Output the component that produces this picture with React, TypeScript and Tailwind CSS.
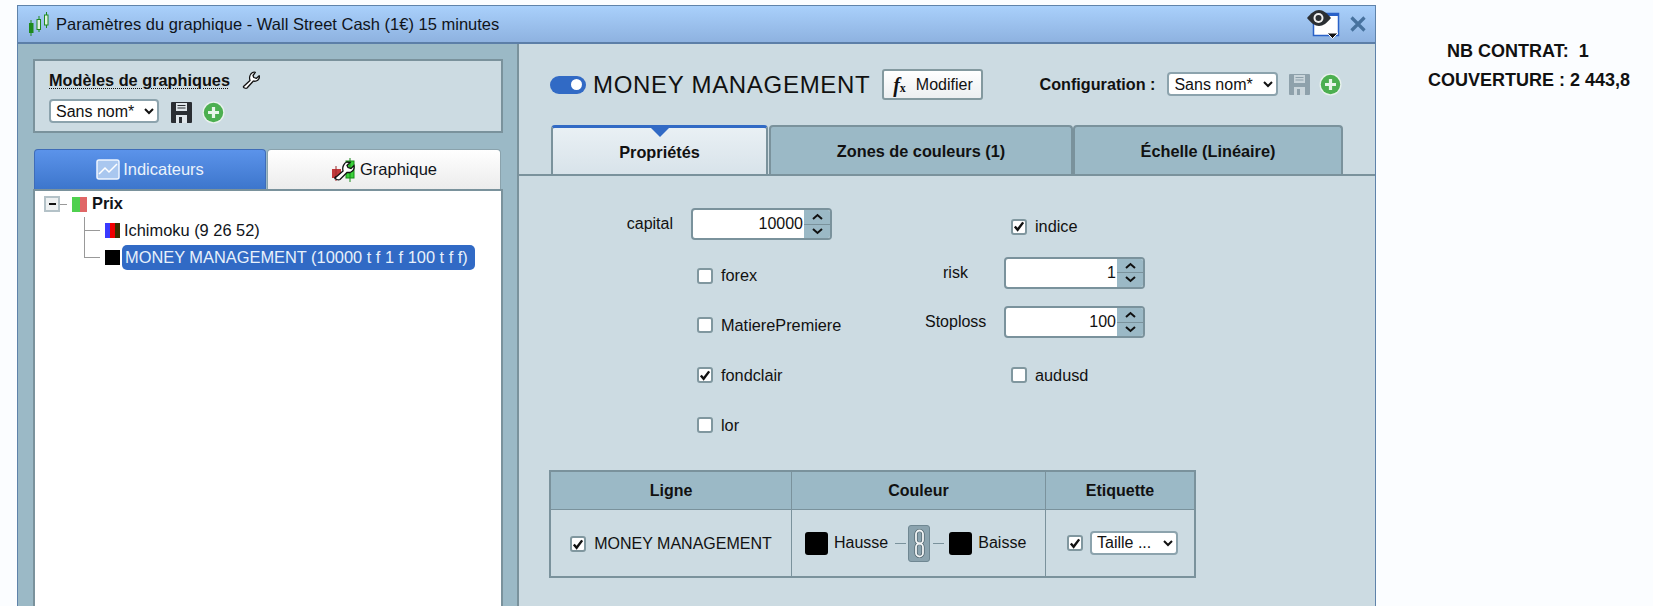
import React from "react";

const F = '[font-family:"Liberation_Sans",Arial,sans-serif]';

function Candles() {
  return (
    <svg width="20" height="24" viewBox="0 0 20 24" className="shrink-0">
      <path d="M2 8v16M10 4v16M17.500 0v16" stroke="#1f8a1f" strokeWidth="1" />
      <rect x="0" y="11" width="4.500" height="10" fill="#1d8a1d" />
      <rect x="8" y="7.500" width="3.500" height="10" fill="#dff3df" stroke="#1f8a1f" />
      <rect x="15.500" y="3" width="3.500" height="10" fill="#dff3df" stroke="#1f8a1f" />
    </svg>
  );
}

function Floppy({ dim }: { dim?: boolean }) {
  const c = dim ? "#8ea1ab" : "#2a2e33";
  return (
    <svg width="21" height="21" viewBox="0 0 21 21" className="shrink-0">
      <path d="M1 0h19a1 1 0 0 1 1 1v19a1 1 0 0 1-1 1H1a1 1 0 0 1-1-1V1a1 1 0 0 1 1-1z" fill={c} />
      <rect x="5" y="1" width="11" height="8" fill={dim ? "#c9d5db" : "#dfe6ea"} />
      <path d="M6.500 3.500h8M6.500 6h8" stroke={c} strokeWidth="1" />
      <rect x="5" y="13" width="11" height="8" fill={dim ? "#c9d5db" : "#dfe6ea"} />
      <rect x="8" y="15" width="3" height="6" fill={c} />
    </svg>
  );
}

function Plus() {
  return (
    <svg width="23" height="23" viewBox="0 0 23 23" className="shrink-0">
      <circle cx="11.500" cy="11.500" r="11" fill="#e9f2ee" />
      <circle cx="11.500" cy="11.500" r="9.700" fill="#4caf50" />
      <path d="M11.500 6v11M6 11.500h11" stroke="#e8f5e9" strokeWidth="3.200" />
    </svg>
  );
}

function Wrench() {
  return (
    <svg width="19" height="19" viewBox="0 0 19 19" className="shrink-0">
      <path
        d="M1.500 15.500 8 9.500C7 6.500 8 3 10.500 1.500c1-.5 2-.5 2.800-.2L11 4.500l.8 2 2.700.8 2.700-2.500c.6 2-.6 4.500-3 5.200-1 .3-2 .3-2.800 0L5 17c-1 .8-4.200-.3-3.500-1.500z"
        fill="#fff"
        stroke="#111"
        strokeWidth="1.300"
        strokeLinejoin="round"
      />
    </svg>
  );
}

function Check() {
  return (
    <svg width="13" height="13" viewBox="0 0 13 13">
      <path d="M2 6.500 5 10l6-8" fill="none" stroke="#111" strokeWidth="2.600" />
    </svg>
  );
}

function Box({ on }: { on?: boolean }) {
  return (
    <span className="flex h-[16px] w-[16px] shrink-0 items-center justify-center rounded-[3px] border-2 border-[#80979f] bg-white">
      {on && <Check />}
    </span>
  );
}

function CheckRow({ label, on }: { label: string; on?: boolean }) {
  return (
    <span className="flex items-center gap-[8px] whitespace-nowrap text-[16.300px] text-[#111]">
      <Box on={on} />
      {label}
    </span>
  );
}

function Spin({ value, w }: { value: string; w: string }) {
  return (
    <span className={`flex h-[32px] ${w} overflow-hidden rounded-[4px] border-2 border-[#7a929c] bg-white`}>
      <span className="flex flex-1 items-center justify-end pr-[1px] text-[16px] text-[#111]">{value}</span>
      <span className="flex w-[26px] flex-col bg-[#9bb9c6]">
        <span className="flex flex-1 items-center justify-center border-b border-[#7a929c]">
          <svg width="11" height="7" viewBox="0 0 11 7"><path d="M1 6l4.500-4L10 6" fill="none" stroke="#111" strokeWidth="2" /></svg>
        </span>
        <span className="flex flex-1 items-center justify-center">
          <svg width="11" height="7" viewBox="0 0 11 7"><path d="M1 1l4.500 4L10 1" fill="none" stroke="#111" strokeWidth="2" /></svg>
        </span>
      </span>
    </span>
  );
}

function Sel({ label, w }: { label: string; w: string }) {
  return (
    <select
      defaultValue={label}
      className={`h-[24px] ${w} rounded-[4px] border-2 border-[#8ca3ad] bg-white pl-[1px] text-[16px] text-[#111] ${F}`}
    >
      <option>{label}</option>
    </select>
  );
}

function TopTab({ label, w }: { label: string; w: string }) {
  return (
    <div className={`flex h-[49px] ${w} items-center justify-center rounded-t-[4px] border-2 border-b-0 border-[#7a929c] bg-[#9bb9c6] pt-[2px] text-[16.300px] font-bold text-[#111]`}>
      {label}
    </div>
  );
}

export default function App() {
  return (
    <div className={`flex h-[606px] w-[1653px] overflow-hidden bg-[#fbfdff] pl-[17px] pt-[5px] ${F}`}>
      <div className="flex h-[601px] w-[1359px] shrink-0 flex-col border-x border-t border-[#5f83aa]">
        {/* title bar */}
        <div className="flex h-[38px] shrink-0 items-center border-b-2 border-[#5c7fa8] bg-gradient-to-b from-[#a9d0fb] to-[#8eb2e0] pl-[11px] pr-[9px]">
          <Candles />
          <span className="ml-[7px] text-[16.500px] text-[#10141a]">Paramètres du graphique - Wall Street Cash (1€) 15 minutes</span>
          <span className="ml-auto flex items-center gap-[9px]">
            <svg width="34" height="29" viewBox="0 0 34 29">
              <rect x="6.500" y="3.500" width="25" height="22" fill="#fff" stroke="#2a62c8" strokeWidth="1.500" />
              <path d="M7 3h24v3H7z" fill="#2a62c8" />
              <path d="M0 8c4-5 8-8 12-8s8 3 12 8c-4 5-8 8-12 8S4 13 0 8z" fill="#2b2f33" />
              <circle cx="11.500" cy="8" r="5" fill="#f1f1f1" />
              <circle cx="11.500" cy="8" r="3" fill="#2b2f33" />
              <path d="M20 23h11l-5.500 5.500z" fill="#111" stroke="#fff" />
            </svg>
            <svg width="16" height="16" viewBox="0 0 16 16">
              <path d="M1.500 1.500l13 13M14.500 1.500l-13 13" stroke="#47729e" strokeWidth="3.200" />
            </svg>
          </span>
        </div>

        <div className="flex min-h-0 flex-1">
          {/* left */}
          <div className="flex w-[501px] shrink-0 flex-col border-r-2 border-[#7a929c] bg-[#9bb9c6] pl-[15px] pr-[14px] pt-[15px]">
            <div className="h-[74px] w-[470px] border-2 border-[#7a929c] bg-[#ccdbe2] pl-[14px] pt-[8px]">
              <div className="flex items-center gap-[12px]">
                <span className="text-[16.300px] font-bold leading-[22px] text-[#111] underline decoration-dotted decoration-1 underline-offset-2">Modèles de graphiques</span>
                <Wrench />
              </div>
              <div className="mt-[7px] flex items-center">
                <Sel label="Sans nom*" w="w-[110px]" />
                <span className="ml-[12px] mt-[3px]"><Floppy /></span>
                <span className="ml-[10px] mt-[3px]"><Plus /></span>
              </div>
            </div>
            <div className="mt-[16px] flex h-[40px] w-[469px] pl-px">
              <div className="flex w-[232px] items-center justify-center gap-[3px] rounded-t-[4px] border-x border-t border-[#3f6cb8] bg-gradient-to-b from-[#5b93ea] to-[#3d76cc] text-[16.500px] text-[#eaf2fb]">
                <svg width="24" height="21" viewBox="0 0 24 21">
                  <rect x="1" y="1" width="22" height="19" rx="2" fill="#a9c7ef" stroke="#f0f6ff" strokeWidth="1.500" />
                  <path d="M3 15l6-6 4 4 8-8" fill="none" stroke="#fff" strokeWidth="1.500" />
                </svg>
                Indicateurs
              </div>
              <div className="ml-[1px] flex w-[234px] items-center justify-center gap-[5px] rounded-t-[4px] border-x border-t border-[#8aa2ac] bg-gradient-to-b from-white to-[#ececec] text-[16.500px] text-[#10141a]">
                <svg width="24" height="24" viewBox="0 0 24 24">
                  <rect x="1" y="11" width="9" height="9" fill="#c0393b" />
                  <path d="M5 8v15" stroke="#9e2a2c" />
                  <rect x="15" y="3" width="8" height="17" fill="#3ad13a" stroke="#168a16" />
                  <path d="M19 0v24" stroke="#168a16" />
                  <path d="M4 20l8-7c-1-4 1-8 4-9l3 .5-3 3 1 2 3 1 3-3c.500 3-1 6-4 7l-3 0-7 7c-2 1-6-1-5-2z" fill="#fff" stroke="#111" strokeWidth="1.300" />
                </svg>
                Graphique
              </div>
            </div>
            <div className="w-[470px] flex-1 border-x-2 border-t-2 border-[#7a929c] bg-white pl-[9px] text-[16.400px] text-[#10141a]">
              <div className="flex h-[26px] items-center">
                <span className="flex h-[16px] w-[16px] items-center justify-center border-2 border-[#b4c2c8] bg-[#eef1f2]">
                  <span className="h-[2px] w-[7px] bg-[#111]" />
                </span>
                <span className="h-px w-[7px] bg-[#999]" />
                <span className="ml-[5px] h-[15px] w-[8px] bg-[#4fd04f]" />
                <span className="h-[15px] w-[7px] bg-[#e06666]" />
                <span className="ml-[5px] -translate-y-[1px] font-bold">Prix</span>
              </div>
              <div className="ml-[40px] flex h-[27px] items-center">
                <span className="h-[14px] w-[16px] -translate-y-[7px] border-b border-l border-[#999]" />
                <span className="ml-[5px] flex h-[15px] w-[15px]">
                  <span className="w-[5px] bg-[#3a3aff]" />
                  <span className="w-[5px] bg-[#f00000]" />
                  <span className="w-[5px] bg-[#3a3000]" />
                </span>
                <span className="ml-[4px]">Ichimoku (9 26 52)</span>
              </div>
              <div className="ml-[40px] flex h-[27px] items-center">
                <span className="h-[27px] w-[16px] -translate-y-[13px] border-b border-l border-[#999]" />
                <span className="ml-[5px] h-[15px] w-[15px] bg-black" />
                <span className="ml-[2px] flex h-[25px] w-[353px] items-center whitespace-nowrap rounded-[5px] bg-[#316ac5] pl-[3px] text-[#e8f1fb]">
                  MONEY MANAGEMENT (10000 t f 1 f 100 t f f)
                </span>
              </div>
            </div>
          </div>

          {/* right */}
          <div className="flex min-w-0 flex-1 flex-col bg-[#ccdbe2]">
            <div className="flex h-[81px] shrink-0 items-center pl-[31px]">
              <span className="flex h-[18px] w-[36px] items-center justify-end rounded-full bg-[#316ac5] pr-[4px]">
                <span className="h-[11px] w-[11px] rounded-full bg-white" />
              </span>
              <span className="ml-[7px] whitespace-nowrap text-[24px] tracking-[0.700px] text-[#111]">MONEY MANAGEMENT</span>
              <span className="ml-[12px] flex h-[31px] w-[101px] items-center justify-center gap-[10px] rounded-[3px] border-2 border-[#83999f] bg-gradient-to-b from-white to-[#eceff1] text-[16px] text-[#111]">
                <span className={`text-[20px] font-bold italic leading-none [font-family:"Liberation_Serif",serif]`}>f<span className="text-[12px] not-italic">x</span></span>
                Modifier
              </span>
              <span className="ml-[56px] whitespace-nowrap text-[16.200px] font-bold text-[#111]">Configuration :</span>
              <span className="ml-[12px]"><Sel label="Sans nom*" w="w-[111px]" /></span>
              <span className="ml-[11px]"><Floppy dim /></span>
              <span className="ml-[9px]"><Plus /></span>
            </div>
            <div className="flex h-[49px] shrink-0 pl-[32px]">
              <div className="relative flex h-[49px] w-[217px] items-center justify-center rounded-t-[4px] border-x-2 border-t-[3px] border-[#7a929c] border-t-[#316ac5] bg-gradient-to-b from-[#e9f0f4] to-[#d8e3ea] pt-[2px] text-[16.300px] font-bold text-[#111]">
                <span className="absolute left-1/2 top-0 h-0 w-0 -translate-x-1/2 border-x-[9px] border-t-[9px] border-x-transparent border-t-[#316ac5]" />
                Propriétés
              </div>
              <div className="ml-px"><TopTab label="Zones de couleurs (1)" w="w-[304px]" /></div>
              <TopTab label="Échelle (Linéaire)" w="w-[270px]" />
            </div>
            <div className="flex-1 border-t-2 border-[#7a929c] pl-[31px]">
              {/* form */}
              <div className="grid w-[595px] grid-cols-[141px_234px_79px_141px] grid-rows-[repeat(5,50px)] pt-[23px] text-[16px] text-[#111]">
                <span className="flex items-center justify-end pr-[18px]">capital</span>
                <span className="flex items-center"><Spin value="10000" w="w-[141px]" /></span>
                <span />
                <span className="flex items-center pl-[7px] pt-[5px]"><CheckRow label="indice" on /></span>

                <span />
                <span className="flex items-center pl-[6px] pt-[3px]"><CheckRow label="forex" /></span>
                <span className="flex items-center pb-[3px] pl-[18px]">risk</span>
                <span className="flex items-center pb-[3px]"><Spin value="1" w="w-[141px]" /></span>

                <span />
                <span className="flex items-center pl-[6px] pt-[2px]"><CheckRow label="MatierePremiere" /></span>
                <span className="flex items-center pb-[4px]">Stoploss</span>
                <span className="flex items-center pb-[4px]"><Spin value="100" w="w-[141px]" /></span>

                <span />
                <span className="flex items-center pl-[6px] pt-[2px]"><CheckRow label="fondclair" on /></span>
                <span />
                <span className="flex items-center pl-[7px] pt-[2px]"><CheckRow label="audusd" /></span>

                <span />
                <span className="flex items-center pl-[6px] pt-[2px]"><CheckRow label="lor" /></span>
              </div>
              {/* table */}
              <div className="-ml-px mt-[21px] w-[647px] border-2 border-[#7a929c] text-[16px] text-[#111]">
                <div className="grid h-[38px] grid-cols-[241px_254px_1fr] border-b border-[#7a929c] bg-[#9bb9c6] font-bold">
                  <span className="flex items-center justify-center border-r border-[#7a929c]">Ligne</span>
                  <span className="flex items-center justify-center border-r border-[#7a929c]">Couleur</span>
                  <span className="flex items-center justify-center">Etiquette</span>
                </div>
                <div className="grid h-[66px] grid-cols-[241px_254px_1fr]">
                  <span className="flex items-center justify-center border-r border-[#7a929c] pt-[2px] [&>span]:text-[16px]"><CheckRow label="MONEY MANAGEMENT" on /></span>
                  <span className="flex items-center whitespace-nowrap border-r border-[#7a929c] pl-[13px]">
                    <span className="h-[23px] w-[23px] rounded-[3px] bg-black" />
                    <span className="ml-[6px]">Hausse</span>
                    <span className="ml-[7px] h-px w-[11px] bg-[#7a929c]" />
                    <span className="ml-[2px] flex h-[37px] w-[22px] items-center justify-center rounded-[3px] border border-[#6f8792] bg-[#8ba3ae]">
                      <svg width="13" height="29" viewBox="0 0 13 29">
                        <rect x="3" y="1.500" width="7" height="13" rx="3.500" fill="none" stroke="#4f626b" strokeWidth="3.200" />
                        <rect x="3" y="14.500" width="7" height="13" rx="3.500" fill="none" stroke="#4f626b" strokeWidth="3.200" />
                        <rect x="3" y="1.500" width="7" height="13" rx="3.500" fill="none" stroke="#f2f5f6" strokeWidth="1.800" />
                        <rect x="3" y="14.500" width="7" height="13" rx="3.500" fill="none" stroke="#f2f5f6" strokeWidth="1.800" />
                      </svg>
                    </span>
                    <span className="ml-[3px] h-px w-[11px] bg-[#7a929c]" />
                    <span className="ml-[5px] h-[23px] w-[23px] rounded-[3px] bg-black" />
                    <span className="ml-[6px]">Baisse</span>
                  </span>
                  <span className="flex items-center pl-[21px]">
                    <Box on />
                    <span className="ml-[7px]"><Sel label="Taille ..." w="w-[88px]" /></span>
                  </span>
                </div>
              </div>
            </div>
          </div>
        </div>
      </div>
      <div className="ml-[52px] flex flex-col pt-[32px] text-[18px] font-bold leading-[29px] text-[#111]">
        <span className="ml-[19px] whitespace-pre">NB CONTRAT:  1</span>
        <span className="whitespace-pre">COUVERTURE : 2 443,8</span>
      </div>
    </div>
  );
}
